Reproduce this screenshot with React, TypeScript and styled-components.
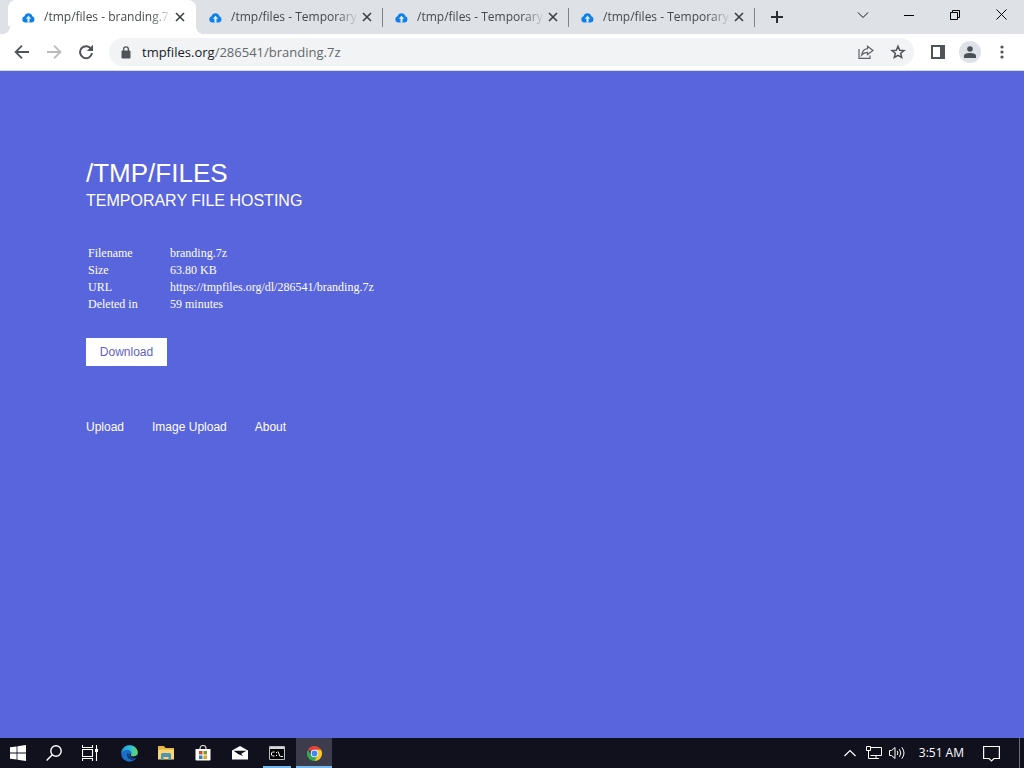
import React from 'react';
import styled, { createGlobalStyle, css } from 'styled-components';

const GlobalStyle = createGlobalStyle`
  *, *::before, *::after { box-sizing: border-box; }
  html, body { margin: 0; padding: 0; }
  button, input { font: inherit; color: inherit; margin: 0; padding: 0; border: 0; background: none; }
  svg { display: block; flex: none; }
`;

const uiFont = '"Open Sans", "Noto Sans", sans-serif';

const Screen = styled.div`
  display: flex;
  flex-direction: column;
  min-height: 100vh;
  font-family: ${uiFont};
`;

const TabStrip = styled.header`
  display: flex;
  height: 34px;
  background: #dee1e6;
  padding-left: 10px;
`;

const Tabs = styled.div`
  display: flex;
  flex: 1;
  min-width: 0;
`;

const Tab = styled.div<{ $active?: boolean }>`
  position: relative;
  display: flex;
  align-items: center;
  flex: 0 1 186px;
  min-width: 0;
  padding: 0 8px 0 12px;
  color: #45494d;

  ${p => p.$active
    ? css`
        background: #fff;
        border-radius: 8px 8px 0 0;
        box-shadow: -2px 0 0 #fff;
        &::before, &::after {
          content: '';
          position: absolute;
          bottom: 0;
          width: 8px;
          height: 8px;
        }
        &::before { right: 100%; background: radial-gradient(circle at 0 0, #dee1e6 8px, #fff 8px); }
        &::after { left: 100%; z-index: 1; background: radial-gradient(circle at 100% 0, #dee1e6 8px, #fff 8px); }
      `
    : css`
        padding: 0 7px 0 13px;
        &::after {
          content: '';
          position: absolute;
          right: -1px;
          top: 8px;
          width: 1px;
          height: 19px;
          background: #808387;
        }
      `}
`;

const TabLabel = styled.button`
  display: flex;
  align-items: center;
  gap: 9px;
  flex: 1;
  min-width: 0;
  font-size: 12px;
  line-height: 16px;
  text-align: left;
`;

const TabTitle = styled.span`
  flex: 1;
  overflow: hidden;
  white-space: nowrap;
  mask-image: linear-gradient(to right, #000 calc(100% - 22px), transparent);
`;

const IconButton = styled.button<{ $w: number; $color?: string }>`
  display: flex;
  align-items: center;
  justify-content: center;
  flex: none;
  width: ${p => p.$w}px;
  color: ${p => p.$color ?? '#505458'};
`;

const WindowControls = styled.div`
  display: flex;
  height: 29px;
`;

const Toolbar = styled.nav`
  display: flex;
  align-items: center;
  height: 37px;
  padding: 0 6px;
  background: #fff;
  border-bottom: 1px solid #d9dbe8;
`;

const Omnibox = styled.div`
  display: flex;
  align-items: center;
  flex: 1;
  height: 28px;
  margin: 0 8px 0 7px;
  padding-left: 12px;
  border-radius: 14px;
  background: #f1f3f4;
`;

const Address = styled.button`
  flex: 1;
  padding-left: 11px;
  font-size: 13px;
  line-height: 20px;
  text-align: left;
  color: #64686c;
`;

const Host = styled.span`
  color: #202124;
`;

const Avatar = styled.span`
  display: flex;
  align-items: center;
  justify-content: center;
  width: 22px;
  height: 22px;
  border-radius: 50%;
  background: #dee1e6;
`;

const Page = styled.main`
  flex: 1;
  padding: 86px;
  background: #5965dc;
  color: #fff;
  font-family: "Liberation Sans", Arial, sans-serif;
`;

const Title = styled.h1`
  margin: 0;
  font-size: 26px;
  line-height: 32px;
  font-weight: 400;
`;

const Subtitle = styled.h2`
  margin: 0;
  font-size: 16px;
  line-height: 24px;
  font-weight: 400;
`;

const FileTable = styled.table`
  margin: 31px 0 24px;
  border-spacing: 2px;
  font-family: "Liberation Serif", "Times New Roman", serif;
  font-size: 12px;
  line-height: 15px;

  th, td { padding: 0; font-weight: 400; text-align: left; }
  th { width: 80px; }
`;

const DownloadButton = styled.button`
  display: block;
  width: 81px;
  height: 28px;
  background: #fff;
  color: #5f63c4;
  font-size: 12px;
`;

const Links = styled.nav`
  display: flex;
  gap: 28px;
  margin-top: 53px;
  font-size: 12px;
  line-height: 16px;
`;

const PageLink = styled.a`
  color: #fff;
  text-decoration: none;
`;

const Taskbar = styled.footer`
  display: flex;
  height: 30px;
  background: #10111c;
  color: #fff;
`;

const SystemButtons = styled.div`
  display: flex;
  margin-right: 3px;
`;

const Apps = styled.div`
  display: flex;
  gap: 1px;
  flex: 1;
`;

const TaskButton = styled.button<{ $running?: boolean; $active?: boolean }>`
  position: relative;
  display: flex;
  align-items: center;
  justify-content: center;
  width: 36px;
  background: ${p => (p.$active ? '#3c3c4c' : 'transparent')};

  ${p => (p.$running || p.$active) && css`
    &::after {
      content: '';
      position: absolute;
      bottom: 0;
      left: ${p.$active ? 0 : 4}px;
      right: ${p.$active ? 0 : 4}px;
      height: 2px;
      background: #76b9ed;
    }
  `}
`;

const Tray = styled.div`
  display: flex;
  align-items: stretch;
`;

const Clock = styled.time`
  align-self: center;
  padding: 0 9px;
  font-size: 12px;
  line-height: 16px;
`;

const ShowDesktop = styled.button`
  width: 5px;
  margin-left: 10px;
  border-left: 1px solid #6c6d78;
`;

const CloudIcon = () => (
  <svg width="13" height="13" viewBox="0 0 13 13" aria-hidden="true">
    <path d="M3.3 11.500A3.100 3.100 0 0 1 .3 8.300C.3 6.800 1.200 5.700 2.500 5.300A4.100 4.100 0 0 1 10.400 5.300A3.200 3.200 0 0 1 9.700 11.500Z" fill="#0f80ea" />
    <path d="M6.500 4.700 9.200 7.700H7.500V11.500H5.500V7.700H3.800Z" fill="#e3f0fd" />
  </svg>
);

const CloseIcon = () => (
  <svg width="10" height="10" viewBox="0 0 10 10" aria-hidden="true">
    <path d="M1 1 9 9M9 1 1 9" stroke="#3c4043" strokeWidth="1.600" />
  </svg>
);

const PlusIcon = () => (
  <svg width="14" height="14" viewBox="0 0 14 14" aria-hidden="true">
    <path d="M7 1V13M1 7H13" stroke="#2c2f33" strokeWidth="2" />
  </svg>
);

const ChevronIcon = () => (
  <svg width="12" height="12" viewBox="0 0 12 12" fill="none" stroke="#111" aria-hidden="true"><path d="M1 3.500 6 8.500 11 3.500" /></svg>
);
const MinimizeIcon = () => (
  <svg width="10" height="10" viewBox="0 0 10 10" stroke="#000" aria-hidden="true"><path d="M0 5.500H10" /></svg>
);
const RestoreIcon = () => (
  <svg width="10" height="10" viewBox="0 0 10 10" fill="none" stroke="#000" aria-hidden="true">
    <path d="M.5 2.500H7.500V9.500H.5ZM2.500 2.500V.5H9.500V7.500H7.500" />
  </svg>
);
const WindowCloseIcon = () => (
  <svg width="11" height="11" viewBox="0 0 11 11" stroke="#000" aria-hidden="true"><path d="M.5.5 10.500 10.500M10.500.5.5 10.500" /></svg>
);

const BackIcon = () => (
  <svg width="16" height="16" viewBox="0 0 16 16" fill="none" stroke="currentColor" strokeWidth="1.800" aria-hidden="true">
    <path d="M15 8H2M8 1.600 1.600 8 8 14.400" />
  </svg>
);
const ForwardIcon = () => (
  <svg width="16" height="16" viewBox="0 0 16 16" fill="none" stroke="currentColor" strokeWidth="1.800" aria-hidden="true">
    <path d="M1 8H14M8 1.600 14.400 8 8 14.400" />
  </svg>
);
const ReloadIcon = () => (
  <svg width="16" height="16" viewBox="0 0 16 16" aria-hidden="true">
    <path d="M13.300 5.200A6 6 0 1 0 14 9.200" fill="none" stroke="currentColor" strokeWidth="2" />
    <path d="M15 .8V7H8.800Z" fill="currentColor" />
  </svg>
);
const LockIcon = () => (
  <svg width="10" height="13" viewBox="0 0 10 13" aria-hidden="true">
    <rect x="0.500" y="4.500" width="9" height="8" rx="1" fill="#505357" />
    <path d="M2.600 5V3.200a2.400 2.400 0 0 1 4.800 0V5" fill="none" stroke="#505357" strokeWidth="1.300" />
  </svg>
);
const ShareIcon = () => (
  <svg width="16" height="16" viewBox="0 0 16 16" fill="none" stroke="currentColor" strokeWidth="1.200" aria-hidden="true">
    <path d="M1 5V14.400H12V11.500" />
    <path d="M9.500 2.200 15 6.500 9.500 10.500V8.300C6.800 8.200 5.200 9.200 3.600 11.200C4.200 7.400 6.200 5 9.500 4.600Z" />
  </svg>
);
const StarIcon = () => (
  <svg width="16" height="16" viewBox="0 0 16 16" fill="none" stroke="currentColor" strokeWidth="1.500" aria-hidden="true">
    <path d="M8 2.200 9.700 6.200 14 6.500 10.700 9.300 11.700 13.500 8 11.300 4.300 13.500 5.300 9.300 2 6.500 6.300 6.200Z" />
  </svg>
);
const SidePanelIcon = () => (
  <svg width="14" height="14" viewBox="0 0 14 14" aria-hidden="true">
    <path d="M0 0H14V14H0ZM2 2V12H9V2Z" fill="currentColor" fillRule="evenodd" />
  </svg>
);
const PersonIcon = () => (
  <svg width="12" height="12" viewBox="0 0 12 12" fill="#4a5058" aria-hidden="true">
    <circle cx="6" cy="3" r="2.800" />
    <path d="M0 12V10C0 7.800 3 7 6 7S12 7.800 12 10V12Z" />
  </svg>
);
const MenuIcon = () => (
  <svg width="4" height="14" viewBox="0 0 4 14" fill="currentColor" aria-hidden="true">
    <circle cx="2" cy="2" r="1.600" /><circle cx="2" cy="7" r="1.600" /><circle cx="2" cy="12" r="1.600" />
  </svg>
);

const WindowsIcon = () => (
  <svg width="16" height="16" viewBox="0 0 16 16" fill="#fff" aria-hidden="true">
    <path d="M0 2.300 6.600 1.400V7.600H0ZM7.400 1.300 16 0V7.600H7.400ZM0 8.400H6.600V14.600L0 13.700ZM7.400 8.400H16V16L7.400 14.700Z" />
  </svg>
);
const SearchIcon = () => (
  <svg width="16" height="16" viewBox="0 0 16 16" fill="none" stroke="#fff" strokeWidth="1.400" aria-hidden="true">
    <circle cx="10" cy="6" r="5.200" /><path d="M6.300 9.700.6 15.400" />
  </svg>
);
const TaskViewIcon = () => (
  <svg width="16" height="16" viewBox="0 0 16 16" fill="none" stroke="#fff" strokeWidth="1.100" aria-hidden="true">
    <path d="M.5 0V2.500H10.500V0M.5 16V13.500H10.500V16M.5 4.500H10.500V11.500H.5ZM14.500 0V16" />
    <rect x="13" y="4" width="3" height="3" fill="#fff" stroke="none" />
  </svg>
);
const EdgeIcon = () => (
  <svg width="17" height="17" viewBox="0 0 17 17" aria-hidden="true">
    <defs>
      <linearGradient id="edgeTop" x1="0" x2="1" y1="0.300" y2="0.500">
        <stop offset="0" stopColor="#2297dd" /><stop offset="0.550" stopColor="#31c3d2" /><stop offset="1" stopColor="#67d957" />
      </linearGradient>
    </defs>
    <circle cx="8.500" cy="8.500" r="8.300" fill="#1a6fc9" />
    <path d="M.3 8C.8 3.300 4.200.2 8.600.2C13.300.2 16.800 3.500 16.800 7.300C16.800 10 14.800 11.500 12.400 11.500C10.700 11.500 9.700 10.900 9.700 10.200C9.700 9.600 10.600 9.400 10.600 8.100C10.600 6.200 8.800 4.700 6.400 4.700C3.500 4.700 1.100 6.100.3 8Z" fill="url(#edgeTop)" />
    <path d="M6.300 8.300C5 12 8 15.400 12 14.900C13.800 14.600 15 13.800 16 12.600C14.500 13.300 12.600 13.600 10.500 12.700C8.300 11.800 7.100 10.200 7.400 8.300C7.600 7.300 6.700 7.200 6.300 8.300Z" fill="#123f83" />
    <path d="M9.700 10.200C9.700 11 10.800 11.500 12.400 11.500C14.100 11.500 15.300 11 16.100 10.100L17 12.500L15.200 12.900C12.400 13.800 8.800 12.500 8.300 9.500C8.200 8.200 10.600 8.300 9.700 10.200Z" fill="#10111c" />
  </svg>
);
const FolderIcon = () => (
  <svg width="16" height="14" viewBox="0 0 16 14" aria-hidden="true">
    <path d="M0 0H6L7.500 2H16V13H0Z" fill="#e8b443" />
    <path d="M0 3.500H16V13.500H0Z" fill="#f9d574" />
    <path d="M3 14V8.500Q3 7 4.500 7H11.500Q13 7 13 8.500V14H10.500V11H5.500V14Z" fill="#4d95b5" />
  </svg>
);
const StoreIcon = () => (
  <svg width="16" height="16" viewBox="0 0 16 16" aria-hidden="true">
    <path d="M5 5V3.500A3 3 0 0 1 11 3.500V5" fill="none" stroke="#ddd" strokeWidth="1.200" />
    <path d="M.5 4H15.500V14.500Q15.500 15.500 14.500 15.500H1.500Q.5 15.500.5 14.500Z" fill="#fff" />
    <path d="M4 6H7.500V9.500H4Z" fill="#c95031" /><path d="M8.500 6H12V9.500H8.500Z" fill="#7d9a28" />
    <path d="M4 10.500H7.500V14H4Z" fill="#2c85bf" /><path d="M8.500 10.500H12V14H8.500Z" fill="#dca51c" />
  </svg>
);
const MailIcon = () => (
  <svg width="16" height="14" viewBox="0 0 16 14" aria-hidden="true">
    <path d="M0 4.500 8 0 16 4.500V13.500H0Z" fill="#fff" />
    <path d="M1.500 4.800H14.500L9.200 7.700 11 10 6.500 8.200Z" fill="#10111c" />
  </svg>
);
const TerminalIcon = () => (
  <svg width="16" height="14" viewBox="0 0 16 14" aria-hidden="true">
    <path d="M.5.5H15.500V13.500H.5Z" fill="#050505" stroke="#b8bdc0" />
    <path d="M1 1H15V3H1Z" fill="#d4d7d9" />
    <path d="M5.500 6H3.500L2.500 7V9L3.500 10H5.500M7.500 6V7M7.500 9V10M9 5.500 11 10.500M11.500 10.500H14" fill="none" stroke="#fff" />
  </svg>
);
const ChromeIcon = () => (
  <svg width="15" height="15" viewBox="0 0 16 16" aria-hidden="true">
    <path d="M8 8 1.070 4A8 8 0 0 1 14.930 4Z" fill="#e5443b" />
    <path d="M8 8V4H14.930A8 8 0 0 1 8 16Z" fill="#fbc91d" />
    <path d="M8 16A8 8 0 0 1 1.070 4L4.540 10 8 8 11.460 10Z" fill="#34a853" />
    <circle cx="8" cy="8" r="4" fill="#fff" />
    <circle cx="8" cy="8" r="3.100" fill="#4285f4" />
  </svg>
);

const TrayChevronIcon = () => (
  <svg width="12" height="8" viewBox="0 0 12 8" fill="none" stroke="#fff" strokeWidth="1.200" aria-hidden="true"><path d="M.5 7 6 1.500 11.500 7" /></svg>
);
const NetworkIcon = () => (
  <svg width="16" height="14" viewBox="0 0 16 14" fill="none" stroke="#fff" aria-hidden="true">
    <path d="M5 1.500H15.500V9.500H4.500M10 9.500V12.500M6 12.500H13M.5.500H4.500V4.500H.5ZM2.500 4.500V12.500H6" />
  </svg>
);
const SpeakerIcon = () => (
  <svg width="17" height="14" viewBox="0 0 17 14" fill="none" stroke="#fff" aria-hidden="true">
    <path d="M.5 4.500H2.500L6 1.500V12.500L2.500 9.500H.5Z" />
    <path d="M8.200 5Q9.600 7 8.200 9M10.500 3.200Q13 7 10.500 10.800M12.800 1.300Q17.200 7 12.800 12.700" />
  </svg>
);
const NotificationIcon = () => (
  <svg width="17" height="17" viewBox="0 0 17 17" fill="none" stroke="#fff" strokeWidth="1.200" aria-hidden="true">
    <path d="M.6 1.500H16.400V13.500H11L8.500 16 6 13.500H.6Z" />
  </svg>
);

const tabs = [
  { title: '/tmp/files - branding.7z', active: true },
  { title: '/tmp/files - Temporary' },
  { title: '/tmp/files - Temporary' },
  { title: '/tmp/files - Temporary' },
];

const details = [
  ['Filename', 'branding.7z'],
  ['Size', '63.80 KB'],
  ['URL', 'https://tmpfiles.org/dl/286541/branding.7z'],
  ['Deleted in', '59 minutes'],
];

export default function App() {
  return (
    <Screen>
      <GlobalStyle />
      <TabStrip>
        <Tabs>
          {tabs.map((tab, i) => (
            <Tab key={i} $active={tab.active}>
              <TabLabel><CloudIcon /><TabTitle>{tab.title}</TabTitle></TabLabel>
              <IconButton $w={16} aria-label="Close tab"><CloseIcon /></IconButton>
            </Tab>
          ))}
          <IconButton $w={46} aria-label="New tab"><PlusIcon /></IconButton>
        </Tabs>
        <WindowControls>
          <IconButton $w={46} aria-label="Search tabs"><ChevronIcon /></IconButton>
          <IconButton $w={46} aria-label="Minimize"><MinimizeIcon /></IconButton>
          <IconButton $w={46} aria-label="Restore"><RestoreIcon /></IconButton>
          <IconButton $w={46} aria-label="Close window"><WindowCloseIcon /></IconButton>
        </WindowControls>
      </TabStrip>
      <Toolbar aria-label="Browser">
        <IconButton $w={32} aria-label="Back"><BackIcon /></IconButton>
        <IconButton $w={32} $color="#b9bbbd" aria-label="Forward"><ForwardIcon /></IconButton>
        <IconButton $w={32} aria-label="Reload"><ReloadIcon /></IconButton>
        <Omnibox>
          <LockIcon />
          <Address><Host>tmpfiles.org</Host>/286541/branding.7z</Address>
          <IconButton $w={32} $color="#5f6368" aria-label="Share"><ShareIcon /></IconButton>
          <IconButton $w={32} aria-label="Bookmark"><StarIcon /></IconButton>
        </Omnibox>
        <IconButton $w={32} aria-label="Side panel"><SidePanelIcon /></IconButton>
        <IconButton $w={32} aria-label="Profile"><Avatar><PersonIcon /></Avatar></IconButton>
        <IconButton $w={32} aria-label="Menu"><MenuIcon /></IconButton>
      </Toolbar>
      <Page>
        <Title>/TMP/FILES</Title>
        <Subtitle>TEMPORARY FILE HOSTING</Subtitle>
        <FileTable>
          <tbody>
            {details.map(([name, value]) => (
              <tr key={name}><th scope="row">{name}</th><td>{value}</td></tr>
            ))}
          </tbody>
        </FileTable>
        <DownloadButton>Download</DownloadButton>
        <Links aria-label="Site">
          <PageLink href="#upload">Upload</PageLink>
          <PageLink href="#image-upload">Image Upload</PageLink>
          <PageLink href="#about">About</PageLink>
        </Links>
      </Page>
      <Taskbar>
        <SystemButtons>
          <TaskButton aria-label="Start"><WindowsIcon /></TaskButton>
          <TaskButton aria-label="Search"><SearchIcon /></TaskButton>
          <TaskButton aria-label="Task view"><TaskViewIcon /></TaskButton>
        </SystemButtons>
        <Apps>
          <TaskButton aria-label="Edge"><EdgeIcon /></TaskButton>
          <TaskButton aria-label="File Explorer"><FolderIcon /></TaskButton>
          <TaskButton aria-label="Store"><StoreIcon /></TaskButton>
          <TaskButton aria-label="Mail"><MailIcon /></TaskButton>
          <TaskButton aria-label="Command Prompt" $running><TerminalIcon /></TaskButton>
          <TaskButton aria-label="Chrome" $active><ChromeIcon /></TaskButton>
        </Apps>
        <Tray>
          <IconButton $w={24} $color="#fff" aria-label="Hidden icons"><TrayChevronIcon /></IconButton>
          <IconButton $w={24} $color="#fff" aria-label="Network"><NetworkIcon /></IconButton>
          <IconButton $w={24} $color="#fff" aria-label="Volume"><SpeakerIcon /></IconButton>
          <Clock>3:51 AM</Clock>
          <IconButton $w={36} $color="#fff" aria-label="Notifications"><NotificationIcon /></IconButton>
          <ShowDesktop aria-label="Show desktop" />
        </Tray>
      </Taskbar>
    </Screen>
  );
}
